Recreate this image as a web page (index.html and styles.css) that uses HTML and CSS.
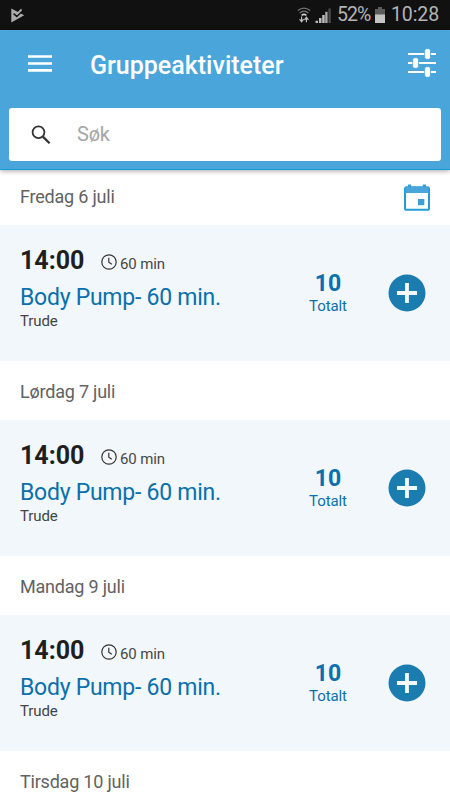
FILE: index.html
```html
<!DOCTYPE html>
<html lang="no">
<head>
    <meta charset="UTF-8">
    <meta name="viewport" content="width=device-width, initial-scale=1.0">
    <title>Gruppeaktiviteter</title>
    <link rel="stylesheet" href="styles.css">
</head>
<body>
    <!-- Shared icons -->
    <svg class="icon-defs">
        <symbol id="clock" viewBox="0 0 16 16">
            <circle cx="8" cy="8" r="7.2" fill="none" stroke="#333" stroke-width="1.2"/>
            <path d="M7.8 3.8v4.5l3 2" fill="none" stroke="#333" stroke-width="1.2"/>
        </symbol>
        <symbol id="plus" viewBox="0 0 38 38">
            <circle cx="19" cy="19" r="18.5" fill="#1b7cb0"/>
            <path d="M19 9v20M9 19h20" stroke="#f4f9fb" stroke-width="3.8"/>
        </symbol>
    </svg>

    <div class="status-bar">
        <svg class="icon-play" viewBox="0 0 14 15">
            <path d="M.3.5L5 3l8.2 4.2L.3 14.5z" fill="#aaa"/>
            <path d="M2.6 5.6l3.2 2.8L12 2.2" fill="none" stroke="#111" stroke-width="1.5"/>
            <path d="M5.6 5.2l4.6-4.6.8 1.8-5 4.8z" fill="#aaa"/>
        </svg>
        <div class="status-right">
            <svg class="icon-wifi" viewBox="0 0 14 16">
                <path d="M.8 3.6q6.2-5 12.4 0M2.6 6q4.4-3.6 8.8 0" fill="none" stroke="#777" stroke-width="1.3"/>
                <path d="M4.6 8.3q2.4-2 4.8 0" fill="none" stroke="#ccc" stroke-width="1.6"/>
                <path d="M4.6 9.5v5M2.6 12.2l2 2.6 2-2.6M9.4 15.2v-4.6M7.4 12.9l2-2.6 2 2.6" fill="none" stroke="#bbb" stroke-width="1.2"/>
            </svg>
            <svg class="icon-signal" viewBox="0 0 16 15">
                <path d="M.5 15v-2.2H3V15zM4 15v-5h2.5v5zM7.2 15V7h2.5v8z" fill="#bbb"/>
                <path d="M10.2 15V3.8h2.4V15z" fill="#aaa"/>
                <path d="M13.4 15V.5h2.4V15z" fill="#4a4a4a"/>
            </svg>
            <span class="battery-text">52%</span>
            <svg class="icon-battery" viewBox="0 0 10 16">
                <path d="M3 0h4v2h3v6H0V2h3z" fill="#5c5c5c"/>
                <path d="M0 7.5h10V16H0z" fill="#c4c4c4"/>
            </svg>
            <span class="clock-text">10:28</span>
        </div>
    </div>

    <div class="header">
        <div class="toolbar">
            <svg class="icon-menu" viewBox="0 0 24 17">
                <path d="M0 1.5h24M0 8.5h24M0 15.3h24" stroke="#fff" stroke-width="2.7"/>
            </svg>
            <h1 class="title">Gruppeaktiviteter</h1>
            <svg class="icon-filter" viewBox="0 0 30 30">
                <path d="M1 6h28M1 15h28M1 24h28" stroke="#fff" stroke-width="2"/>
                <g fill="#fff" stroke="#49a5da" stroke-width=".8">
                    <rect x="17.7" y=".7" width="5.8" height="10.6" rx="2"/>
                    <rect x="5.7" y="9.7" width="5.8" height="10.6" rx="2"/>
                    <rect x="17.7" y="18.7" width="5.8" height="10.6" rx="2"/>
                </g>
            </svg>
        </div>
        <div class="search">
            <svg class="icon-search" viewBox="0 0 20 20">
                <circle cx="7.5" cy="7.3" r="5.9" fill="none" stroke="#333" stroke-width="1.8"/>
                <path d="M11.8 11.6l6.8 6.7" stroke="#333" stroke-width="2.3"/>
            </svg>
            <span class="search-text">Søk</span>
        </div>
    </div>

    <div class="list">
        <div class="date-row date-row-first">
            <span class="date">Fredag 6 juli</span>
            <svg class="icon-calendar" viewBox="0 0 26 27">
                <path d="M4 .5h3.2V3H4zM18.8.5H22V3h-3.2z" fill="#3d9ed5"/>
                <rect x="1" y="3.2" width="24" height="22.6" rx="1.6" fill="none" stroke="#259cd6" stroke-width="2"/>
                <path d="M1.4 3h23.2v6H1.4z" fill="#49a5da"/>
                <path d="M14 15h6.3v6.2H14z" fill="#3d9ed5"/>
            </svg>
        </div>
        <div class="activity">
            <div class="info">
                <div class="time-row">
                    <span class="time">14:00</span>
                    <svg class="icon-clock"><use href="#clock"/></svg>
                    <span class="duration">60 min</span>
                </div>
                <div class="name">Body Pump- 60 min.</div>
                <div class="trainer">Trude</div>
            </div>
            <div class="total">
                <div class="total-number">10</div>
                <div class="total-label">Totalt</div>
            </div>
            <svg class="icon-plus"><use href="#plus"/></svg>
        </div>

        <div class="date-row"><span class="date">Lørdag 7 juli</span></div>
        <div class="activity">
            <div class="info">
                <div class="time-row">
                    <span class="time">14:00</span>
                    <svg class="icon-clock"><use href="#clock"/></svg>
                    <span class="duration">60 min</span>
                </div>
                <div class="name">Body Pump- 60 min.</div>
                <div class="trainer">Trude</div>
            </div>
            <div class="total">
                <div class="total-number">10</div>
                <div class="total-label">Totalt</div>
            </div>
            <svg class="icon-plus"><use href="#plus"/></svg>
        </div>

        <div class="date-row"><span class="date">Mandag 9 juli</span></div>
        <div class="activity">
            <div class="info">
                <div class="time-row">
                    <span class="time">14:00</span>
                    <svg class="icon-clock"><use href="#clock"/></svg>
                    <span class="duration">60 min</span>
                </div>
                <div class="name">Body Pump- 60 min.</div>
                <div class="trainer">Trude</div>
            </div>
            <div class="total">
                <div class="total-number">10</div>
                <div class="total-label">Totalt</div>
            </div>
            <svg class="icon-plus"><use href="#plus"/></svg>
        </div>

        <div class="date-row"><span class="date">Tirsdag 10 juli</span></div>
    </div>
</body>
</html>
```

FILE: styles.css
```css
:root {
    --blue: #49a5da;
    --dark-blue: #0b70ab;
    --card: #f1f7fa;
}

* {
    margin: 0;
    padding: 0;
    box-sizing: border-box;
}

body {
    font-family: Roboto, sans-serif;
    background: white;
    height: 800px;
    overflow: hidden;
}

svg {
    display: block;
    flex-shrink: 0;
}

.icon-defs {
    display: none;
}

/* Status bar */
.status-bar {
    display: flex;
    align-items: center;
    justify-content: space-between;
    height: 30px;
    padding: 0 11px;
    background: #111;
    color: #b4b4b4;
    font-size: 19.5px;
}

.icon-play {
    width: 14px;
    height: 15px;
}

.status-right {
    display: flex;
    align-items: center;
    line-height: 32px;
}

.icon-wifi {
    width: 14px;
    height: 16px;
    margin-right: 4px;
}

.icon-signal {
    width: 16px;
    height: 15px;
    margin-right: 6px;
}

.battery-text {
    width: 34px;
    margin-right: 4px;
    letter-spacing: -0.9px;
}

.icon-battery {
    width: 10px;
    height: 16px;
    margin-right: 6px;
}

.clock-text {
    width: 48px;
    letter-spacing: -0.1px;
}

/* Header */
.header {
    position: relative;
    height: 140px;
    padding: 0 9px;
    background: var(--blue);
    border-bottom: 1px solid #149bd6;
    box-shadow: 0 1px 5px rgba(0, 0, 0, 0.35);
}

.toolbar {
    display: flex;
    align-items: center;
    height: 78px;
    padding: 0 4px 12px 19px;
}

.icon-menu {
    width: 24px;
    height: 17px;
}

.title {
    flex: 1;
    margin-left: 38px;
    padding-top: 6px;
    color: white;
    font-size: 25px;
    font-weight: 500;
    line-height: 30px;
}

.icon-filter {
    width: 30px;
    height: 30px;
}

.search {
    display: flex;
    align-items: center;
    height: 53px;
    padding-left: 22px;
    background: white;
    border-radius: 3px;
}

.icon-search {
    width: 20px;
    height: 20px;
}

.search-text {
    margin: -2px 0 0 26px;
    color: #a6a6a6;
    font-size: 20px;
    letter-spacing: -0.2px;
}

/* Activity list */
.date-row {
    display: flex;
    align-items: center;
    justify-content: space-between;
    height: 59px;
    padding: 2px 20px 0;
}

.date-row-first {
    height: 55px;
    padding-top: 0;
}

.date-row-first .date {
    margin-top: -2px;
}

.date {
    color: #626262;
    font-size: 18px;
    letter-spacing: -0.21px;
}

.icon-calendar {
    width: 26px;
    height: 27px;
}

.activity {
    display: flex;
    align-items: flex-start;
    height: 136px;
    padding: 20px 24px 0 20px;
    background: var(--card);
}

.info {
    width: 268px;
}

.time-row {
    display: flex;
    align-items: center;
    height: 31px;
}

.time {
    width: 81px;
    color: #1f1f1f;
    font-size: 25px;
    font-weight: 700;
}

.icon-clock {
    width: 16px;
    height: 16px;
    margin-top: 3px;
}

.duration {
    margin: 6px 0 0 3px;
    color: #484848;
    font-size: 15px;
    letter-spacing: -0.15px;
}

.name {
    color: var(--dark-blue);
    font-size: 23px;
    letter-spacing: -0.26px;
    line-height: 44px;
}

.trainer {
    color: #444;
    font-size: 15px;
    line-height: 18px;
    letter-spacing: -0.1px;
    margin-top: -8px;
}

.total {
    width: 80px;
    margin-top: 25px;
    color: var(--dark-blue);
    text-align: center;
}

.total-number {
    font-size: 23px;
    font-weight: 700;
    line-height: 28px;
}

.total-label {
    font-size: 15px;
    line-height: 18px;
    letter-spacing: -0.1px;
    margin-top: -1px;
}

.icon-plus {
    width: 38px;
    height: 38px;
    margin: 29px 0 0 20px;
}
```
